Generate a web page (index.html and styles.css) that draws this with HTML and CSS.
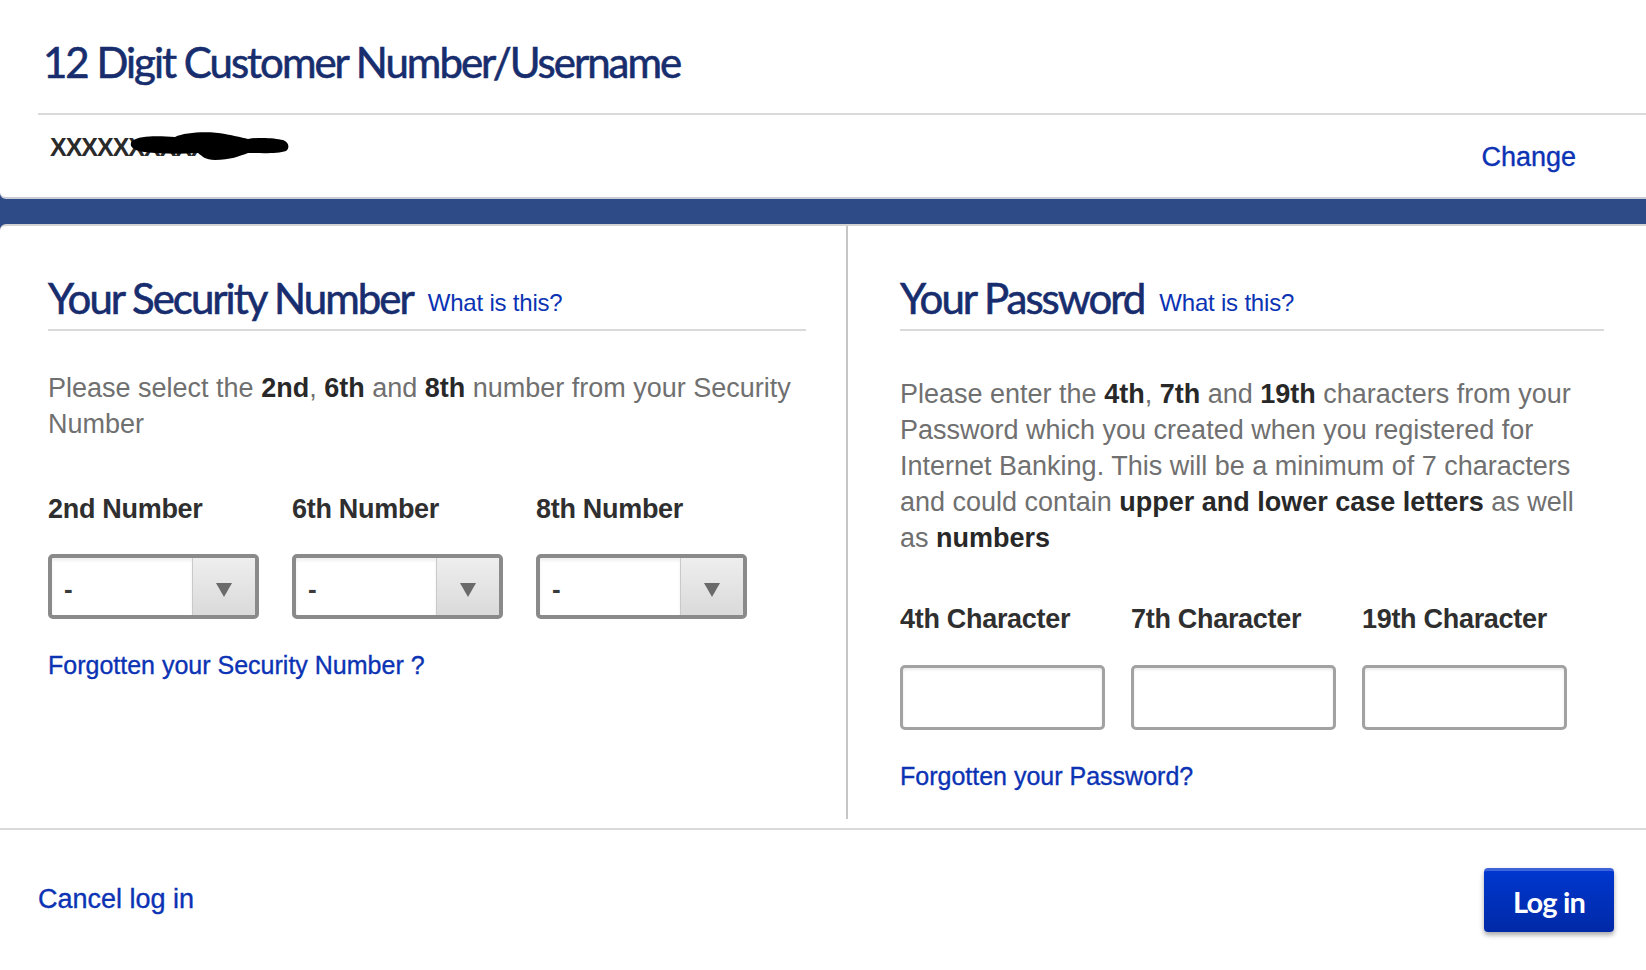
FILE: index.html
```html
<!DOCTYPE html>
<html lang="en">
<head>
<meta charset="utf-8">
<title>Log in</title>
<link rel="stylesheet" href="styles.css">
</head>
<body>
<div class="page">
  <section class="top-card">
    <h1 class="title">12 Digit Customer Number/Username</h1>
    <div class="user-row">
      <div class="username">
        <span class="user-text">XXXXXXXXXX</span>
        <svg class="redact" width="160" height="34" viewBox="0 0 160 34" aria-hidden="true">
          <path d="M2 12 C10 6 30 7 45 8 C55 3 80 2 95 5 C105 7 110 8 118 10 C130 8 145 9 153 11 C159 13 160 19 156 22 C148 25 130 24 118 24 C110 27 100 31 85 31 C75 31 72 27 68 24 C50 25 30 25 15 23 C4 22 -2 17 2 12 Z" fill="#000"/>
        </svg>
      </div>
      <a class="link link-medium change" href="#">Change</a>
    </div>
  </section>

  <section class="main-card">
    <div class="columns">
      <div class="col col-left">
        <div class="section-head">
          <h2 class="section-title">Your Security Number</h2>
          <a class="link what" href="#">What is this?</a>
        </div>
        <p class="intro intro-left"><span>Please select the </span><b>2nd</b><span>, </span><b>6th</b><span> and </span><b>8th</b><span> number from your Security</span> <span>Number</span></p>
        <div class="fields fields-select">
          <div class="field">
            <div class="field-label">2nd Number</div>
            <div class="select">
              <span class="select-value">-</span>
              <span class="select-arrow"><svg width="16" height="14" viewBox="0 0 16 14"><path d="M0 0 H16 L8 14 Z" fill="#6a6a6a"/></svg></span>
            </div>
          </div>
          <div class="field">
            <div class="field-label">6th Number</div>
            <div class="select">
              <span class="select-value">-</span>
              <span class="select-arrow"><svg width="16" height="14" viewBox="0 0 16 14"><path d="M0 0 H16 L8 14 Z" fill="#6a6a6a"/></svg></span>
            </div>
          </div>
          <div class="field">
            <div class="field-label">8th Number</div>
            <div class="select">
              <span class="select-value">-</span>
              <span class="select-arrow"><svg width="16" height="14" viewBox="0 0 16 14"><path d="M0 0 H16 L8 14 Z" fill="#6a6a6a"/></svg></span>
            </div>
          </div>
        </div>
        <a class="link link-medium forgot forgot-left" href="#">Forgotten your Security Number ?</a>
      </div>

      <div class="col col-right">
        <div class="section-head">
          <h2 class="section-title">Your Password</h2>
          <a class="link what" href="#">What is this?</a>
        </div>
        <p class="intro intro-right"><span>Please enter the </span><b>4th</b><span>, </span><b>7th</b><span> and </span><b>19th</b><span> characters from your</span> <span>Password which you created when you registered for</span> <span>Internet Banking. This will be a minimum of 7 characters</span> <span>and could contain </span><b>upper and lower case letters</b><span> as well</span> <span>as </span><b>numbers</b></p>
        <div class="fields fields-input">
          <div class="field">
            <div class="field-label">4th Character</div>
            <input class="char-input" type="password" aria-label="4th Character">
          </div>
          <div class="field">
            <div class="field-label">7th Character</div>
            <input class="char-input" type="password" aria-label="7th Character">
          </div>
          <div class="field">
            <div class="field-label">19th Character</div>
            <input class="char-input" type="password" aria-label="19th Character">
          </div>
        </div>
        <a class="link link-medium forgot forgot-right" href="#">Forgotten your Password?</a>
      </div>
    </div>

    <div class="footer">
      <a class="link link-medium cancel" href="#">Cancel log in</a>
      <button class="login-btn" type="button">Log in</button>
    </div>
  </section>
</div>
</body>
</html>
```

FILE: styles.css
```css
* { box-sizing: border-box; }

html, body {
  margin: 0;
  padding: 0;
  background: #ffffff;
}

body {
  font-family: "Liberation Sans", Arial, Helvetica, sans-serif;
  color: #2d2d2d;
  overflow: hidden;
}

.page {
  width: 1646px;
  height: 970px;
  background: #2e4a87;
  display: flex;
  flex-direction: column;
  gap: 25px;
}

/* ---------- top card ---------- */
.top-card {
  background: #fff;
  border-bottom: 2px solid #c9ccd4;
  border-radius: 0 0 0 6px;
  padding-top: 37px;
  height: 199px;
}

.title {
  margin: 0 0 26px 43px;
  font-family: Lato, "Open Sans", sans-serif;
  font-weight: 400;
  font-size: 42px;
  line-height: 1.2;
  letter-spacing: -2px;
  color: #172d6e;
  -webkit-text-stroke: 0.6px #172d6e;
}

.user-row {
  margin-left: 38px;
  border-top: 2px solid #dadada;
  display: flex;
  align-items: flex-start;
  justify-content: space-between;
  padding-right: 70px;
  height: 82px;
}

.username {
  position: relative;
  margin: 18px 0 0 12px;
  font-weight: 700;
  font-size: 25px;
  line-height: 28px;
  color: #2a2a2a;
  letter-spacing: -1px;
}

.redact {
  position: absolute;
  left: 80px;
  top: -4px;
}

.link {
  color: #0b33b4;
  text-decoration: none;
}

.link-medium {
  -webkit-text-stroke: 0.35px #0b33b4;
}

.change {
  margin-top: 26px;
  font-size: 27px;
  line-height: 32px;
}

/* ---------- main card ---------- */
.main-card {
  flex: 1;
  background: #fff;
  border-top: 2px solid #d3d3d3;
  border-radius: 6px 0 0 0;
  display: flex;
  flex-direction: column;
}

.columns {
  display: flex;
  height: 593px;
}

.col {
  display: flex;
  flex-direction: column;
  align-items: flex-start;
}

.col-left {
  width: 848px;
  border-right: 2px solid #c6c6c6;
  padding: 47px 40px 0 48px;
}

.col-right {
  flex: 1;
  padding: 47px 42px 0 52px;
}

.section-head {
  align-self: stretch;
  display: flex;
  align-items: flex-end;
  gap: 15px;
  border-bottom: 2px solid #dadada;
  padding-bottom: 6px;
}

.section-title {
  margin: 0;
  font-family: Lato, "Open Sans", sans-serif;
  font-weight: 400;
  font-size: 42px;
  line-height: 1.2;
  letter-spacing: -2px;
  color: #172d6e;
  -webkit-text-stroke: 0.6px #172d6e;
}

.what {
  font-size: 24px;
  line-height: 28px;
  margin-bottom: 6px;
  letter-spacing: -0.2px;
}

.intro {
  margin: 0;
  font-size: 27px;
  line-height: 36px;
  color: #707070;
}

.intro b {
  color: #282828;
}

.intro-left { margin-top: 39px; }
.intro-right { margin-top: 45px; }

.fields {
  display: flex;
}

.fields-select { gap: 33px; margin-top: 51px; }
.fields-input { gap: 26px; margin-top: 47px; }

.field {
  display: flex;
  flex-direction: column;
}

.field-label {
  font-weight: 700;
  font-size: 27px;
  line-height: 32px;
  color: #2f2f2f;
  letter-spacing: -0.3px;
  margin-bottom: 30px;
}

.fields-select .field-label { margin-bottom: 29px; }

.select {
  width: 211px;
  height: 65px;
  border: 4px solid #8a8a8a;
  border-radius: 5px;
  display: flex;
  overflow: hidden;
  background: #fff;
}

.select-value {
  flex: 1;
  padding: 6px 0 0 12px;
  font-size: 26px;
  font-weight: 700;
  line-height: 51px;
  color: #3a3a3a;
  box-shadow: inset 0 3px 3px rgba(0,0,0,0.06);
}

.select-arrow {
  width: 63px;
  border-left: 1px solid #c9c9c9;
  background: linear-gradient(#eeeeee, #dadada);
  display: flex;
  align-items: center;
  justify-content: center;
  padding-top: 6px;
}

.char-input {
  width: 205px;
  height: 65px;
  border: 3px solid #a2a2a2;
  border-radius: 5px;
  background: #fff;
  box-shadow: inset 0 2px 3px rgba(0,0,0,0.08);
  outline: none;
  padding: 0 10px;
  font-size: 22px;
}

.forgot {
  font-size: 25px;
  line-height: 30px;
}

.forgot-left { margin-top: 31px; }
.forgot-right { margin-top: 31px; }

/* ---------- footer ---------- */
.footer {
  margin-top: 9px;
  border-top: 2px solid #dadada;
  display: flex;
  align-items: center;
  justify-content: space-between;
  padding: 38px 32px 0 38px;
}

.cancel {
  font-size: 27px;
  line-height: 32px;
  margin-top: -3px;
}

.login-btn {
  width: 130px;
  height: 64px;
  border: 0;
  border-top: 3px solid #3f63d8;
  border-radius: 4px;
  background: linear-gradient(#0037cf, #0029a6);
  box-shadow: 0 3px 5px rgba(0,0,0,0.35);
  color: #fff;
  font-family: Lato, "Open Sans", sans-serif;
  font-weight: 700;
  font-size: 29px;
  letter-spacing: -0.8px;
  padding: 0;
  cursor: pointer;
}
```
